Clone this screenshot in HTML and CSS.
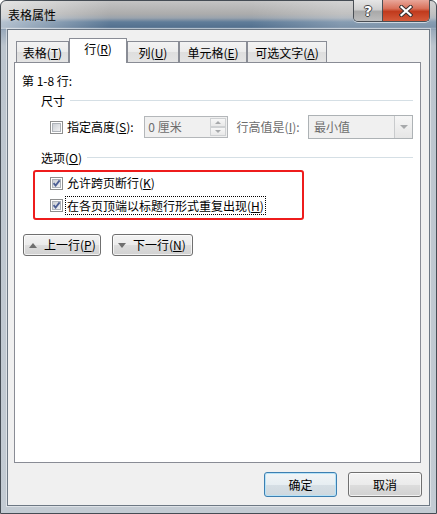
FILE: index.html
```html
<!DOCTYPE html>
<html lang="zh-CN">
<head>
<meta charset="utf-8">
<title>表格属性</title>
<link rel="stylesheet" href="styles.css">
</head>
<body>
<div class="window">
  <div class="titlebar">
    <span class="title">表格属性</span>
    <div class="caption">
      <div class="cbtn help"><span class="q">?</span></div>
      <div class="cbtn close">
        <svg width="14" height="12" viewBox="0 0 14 12">
          <path d="M2.5 2 L11.5 10 M11.5 2 L2.5 10" stroke="#3a3030" stroke-width="4.2" stroke-linecap="square" fill="none"/>
          <path d="M2.5 2 L11.5 10 M11.5 2 L2.5 10" stroke="#ffffff" stroke-width="2.2" stroke-linecap="square" fill="none"/>
        </svg>
      </div>
    </div>
  </div>
  <div class="client">
    <div class="tabs">
      <div class="tab w1">表格(<u>T</u>)</div>
      <div class="tab active w2">行(<u>R</u>)</div>
      <div class="tab w3">列(<u>U</u>)</div>
      <div class="tab w4">单元格(<u>E</u>)</div>
      <div class="tab w5">可选文字(<u>A</u>)</div>
    </div>
    <div class="panel">
      <div class="rowsel">第 1-8 行:</div>
      <div class="group g1"><span>尺寸</span><i class="rule"></i></div>
      <div class="sizerow">
        <svg class="cb" width="13" height="13" viewBox="0 0 13 13">
          <defs>
            <linearGradient id="cbg" x1="0" y1="0" x2="1" y2="1">
              <stop offset="0" stop-color="#c9cdd3"/>
              <stop offset="1" stop-color="#f4f4f5"/>
            </linearGradient>
          </defs>
          <rect x="0.5" y="0.5" width="12" height="12" fill="#fff" stroke="#8e8f8f"/>
          <rect x="2.5" y="2.5" width="8" height="8" fill="url(#cbg)" stroke="#aeb3b9"/>
        </svg>
        <span class="lbl l1">指定高度(<u>S</u>):</span>
        <div class="spin">
          <span class="val">0 厘米</span>
          <div class="arrows">
            <span class="sb up"><i></i></span>
            <span class="sb down"><i></i></span>
          </div>
        </div>
        <span class="lbl l2 dis">行高值是(<u>I</u>):</span>
        <div class="combo">
          <span class="val">最小值</span>
          <span class="drop"><i></i></span>
        </div>
      </div>
      <div class="group g2"><span>选项(<u>O</u>)</span><i class="rule"></i></div>
      <div class="highlight">
        <div class="check">
          <svg class="cb" width="13" height="13" viewBox="0 0 13 13">
            <rect x="0.5" y="0.5" width="12" height="12" fill="#fff" stroke="#8e8f8f"/>
            <rect x="2.5" y="2.5" width="8" height="8" fill="url(#cbg)" stroke="#aeb3b9"/>
            <path d="M3.6 6.2 L5.6 8.6 L9.6 3.4" stroke="#4b5e94" stroke-width="1.8" fill="none"/>
          </svg>
          <span class="lbl">允许跨页断行(<u>K</u>)</span>
        </div>
        <div class="check">
          <svg class="cb" width="13" height="13" viewBox="0 0 13 13">
            <rect x="0.5" y="0.5" width="12" height="12" fill="#fff" stroke="#8e8f8f"/>
            <rect x="2.5" y="2.5" width="8" height="8" fill="url(#cbg)" stroke="#aeb3b9"/>
            <path d="M3.6 6.2 L5.6 8.6 L9.6 3.4" stroke="#4b5e94" stroke-width="1.8" fill="none"/>
          </svg>
          <span class="lbl focus">在各页顶端以标题行形式重复出现(<u>H</u>)</span>
        </div>
      </div>
      <div class="nav">
        <div class="btn navbtn prev"><i class="tri up"></i><span>上一行(<u>P</u>)</span></div>
        <div class="btn navbtn next"><i class="tri down"></i><span>下一行(<u>N</u>)</span></div>
      </div>
    </div>
    <div class="footer">
      <div class="btn big default">确定</div>
      <div class="btn big">取消</div>
    </div>
  </div>
</div>
</body>
</html>
```

FILE: styles.css
```css
html, body {
  margin: 0;
  padding: 0;
  background: #ffffff;
  overflow: hidden;
}

body {
  font-family: "Noto Sans CJK SC", "Noto Sans", "Liberation Sans", sans-serif;
  font-size: 12px;
  line-height: 16px;
  color: #000;
}

u {
  text-decoration: underline;
  text-underline-offset: 1px;
}

.window {
  width: 437px;
  height: 514px;
  box-sizing: border-box;
  border: 1px solid #454c54;
  border-radius: 6px 6px 0 0;
  padding: 0 6px 7px 6px;
  display: flex;
  flex-direction: column;
  background:
    linear-gradient(90deg, rgba(255,255,255,0.55) 0, rgba(255,255,255,0) 110px, rgba(255,255,255,0) 250px, rgba(255,255,255,0.25) 340px) 0 0 / 100% 28px no-repeat,
    linear-gradient(180deg, #c4c4c4 0, #acacac 13px, #9aa3ad 17px, #5f7c99 21px, #54718f 26px, #9aaabb 29px, #bcc5ce 45px, #c3cbd3 100%);
}

.titlebar {
  height: 28px;
  display: flex;
  justify-content: space-between;
  align-items: flex-start;
  flex: none;
}

.title {
  margin: 6px 0 0 1px;
  line-height: 16px;
  color: #000;
}

.caption {
  display: flex;
  margin-top: -1px;
  height: 21px;
  border: 1px solid #4a4f55;
  border-top: none;
  border-radius: 0 0 5px 5px;
  overflow: hidden;
  box-shadow: 0 1px 0 rgba(255,255,255,0.6);
}

.cbtn {
  height: 21px;
  display: flex;
  align-items: center;
  justify-content: center;
}

.help {
  width: 28px;
  border-right: 1px solid #4a4f55;
  background: linear-gradient(180deg, #e6e6e6 0, #cfcfcf 45%, #a9a9a9 55%, #bdbdbd 100%);
}

.q {
  font-family: "DejaVu Sans", sans-serif;
  font-weight: bold;
  font-size: 14px;
  line-height: 16px;
  color: #fff;
  text-shadow: -1px 0 #444, 1px 0 #444, 0 -1px #444, 0 1px #444;
}

.close {
  width: 46px;
  background: linear-gradient(180deg, #e9a79a 0, #d9715b 40%, #c13a1d 55%, #d45a3a 100%);
}

.close svg {
  display: block;
}

.client {
  flex: 1;
  border: 1px solid #6d7884;
  background: #f0f0f0;
  display: flex;
  flex-direction: column;
  padding-top: 8px;
  box-shadow: 0 0 0 1px rgba(255,255,255,0.45);
}

.tabs {
  display: flex;
  align-items: flex-end;
  height: 24px;
  padding-left: 8px;
  flex: none;
}

.tab {
  box-sizing: border-box;
  height: 21px;
  border: 1px solid #898c95;
  border-bottom: none;
  background: linear-gradient(180deg, #f3f3f3 0, #ebebeb 50%, #dedede 51%, #e4e4e4 100%);
  text-align: center;
  line-height: 19px;
  padding-top: 1px;
}

.tab.active {
  height: 25px;
  margin-bottom: -1px;
  background: #ffffff;
  position: relative;
  z-index: 1;
  line-height: 20px;
  padding-top: 0;
}

.w1 { width: 53px; }
.w2 { width: 58px; }
.w3 { width: 52px; }
.w4 { width: 68px; }
.w5 { width: 80px; }

.panel {
  box-sizing: border-box;
  height: 401px;
  margin: 0 8px 0 6px;
  border: 1px solid #898c95;
  background: #ffffff;
  padding: 10px 7px 0 7px;
  display: flex;
  flex-direction: column;
  flex: none;
}

.rowsel {
  line-height: 16px;
}

.group {
  display: flex;
  align-items: center;
  margin-left: 19px;
  line-height: 16px;
}

.g1 { margin-top: 4px; }
.g2 { margin-top: 11px; }

.rule {
  flex: 1;
  height: 1px;
  background: #d5dfe5;
  margin-left: 5px;
  margin-top: -1px;
}

.sizerow {
  display: flex;
  align-items: center;
  height: 24px;
  margin-top: 6px;
  padding-left: 28px;
}

.cb {
  display: block;
  flex: none;
}

.lbl {
  margin-left: 4px;
  white-space: nowrap;
}

.l1 {
  width: 78px;
}

.l2 {
  margin-left: 9px;
  width: 72px;
}

.dis {
  color: #6d6d6d;
}

.spin {
  box-sizing: border-box;
  width: 84px;
  height: 22px;
  border: 1px solid #b4b7ba;
  background: #f0f0f0;
  display: flex;
  justify-content: space-between;
  align-items: stretch;
}

.val {
  color: #6d6d6d;
  padding-left: 3px;
  line-height: 20px;
}

.arrows {
  width: 16px;
  display: flex;
  flex-direction: column;
  padding: 1px 1px 1px 0;
  gap: 0;
}

.sb {
  flex: 1;
  border: 1px solid #cfd1d3;
  background: linear-gradient(180deg, #f7f7f7, #e9e9e9);
  display: flex;
  align-items: center;
  justify-content: center;
}

.sb i, .drop i, .tri {
  display: block;
  width: 0;
  height: 0;
  border-left: 3px solid transparent;
  border-right: 3px solid transparent;
}

.sb.up i { border-bottom: 3px solid #a7a9ab; }
.sb.down i { border-top: 3px solid #a7a9ab; }

.combo {
  box-sizing: border-box;
  width: 106px;
  height: 24px;
  border: 1px solid #adb2b5;
  background: #f0f0f0;
  display: flex;
  justify-content: space-between;
}

.combo .val {
  padding-left: 5px;
  line-height: 22px;
}

.drop {
  width: 17px;
  border-left: 1px solid #c9cbcd;
  background: linear-gradient(180deg, #f6f6f6, #e6e6e6);
  display: flex;
  align-items: center;
  justify-content: center;
}

.drop i {
  border-left-width: 4px;
  border-right-width: 4px;
  border-top: 4px solid #a7a9ab;
}

.highlight {
  box-sizing: border-box;
  width: 271px;
  height: 50px;
  margin-top: 4px;
  margin-left: 11px;
  border: 2px solid #ee1c1c;
  border-radius: 3px;
  padding: 1px 0 0 15px;
  display: flex;
  flex-direction: column;
  gap: 2px;
}

.check {
  display: flex;
  align-items: center;
  height: 20px;
}

.focus {
  margin-left: 2px;
  padding: 0 1px;
  border: 1px dotted #000;
  line-height: 17px;
}

.nav {
  display: flex;
  gap: 11px;
  margin-top: 14px;
  margin-left: 1px;
}

.btn {
  box-sizing: border-box;
  border: 1px solid #707070;
  border-radius: 3px;
  background: linear-gradient(180deg, #f3f3f3 0, #ebebeb 50%, #dddddd 51%, #d1d1d1 100%);
  box-shadow: inset 0 0 0 1px rgba(255,255,255,0.7);
  display: flex;
  align-items: center;
}

.navbtn {
  height: 22px;
  padding-left: 5px;
}

.prev { width: 78px; }
.next { width: 81px; }

.tri {
  border-left-width: 4px;
  border-right-width: 4px;
  margin-right: 7px;
}

.tri.up { border-bottom: 5px solid #6f6f6f; }
.tri.down { border-top: 5px solid #6f6f6f; }

.footer {
  display: flex;
  justify-content: flex-end;
  gap: 11px;
  margin-top: 9px;
  padding-right: 7px;
}

.big {
  width: 74px;
  height: 25px;
  justify-content: center;
}

.default {
  width: 73px;
  border-color: #3c7fb1;
  box-shadow: inset 0 0 0 1px #b6e2f7;
  background: linear-gradient(180deg, #f1f5f7 0, #e7eef2 50%, #d6dfe5 51%, #cfd8de 100%);
}
```
